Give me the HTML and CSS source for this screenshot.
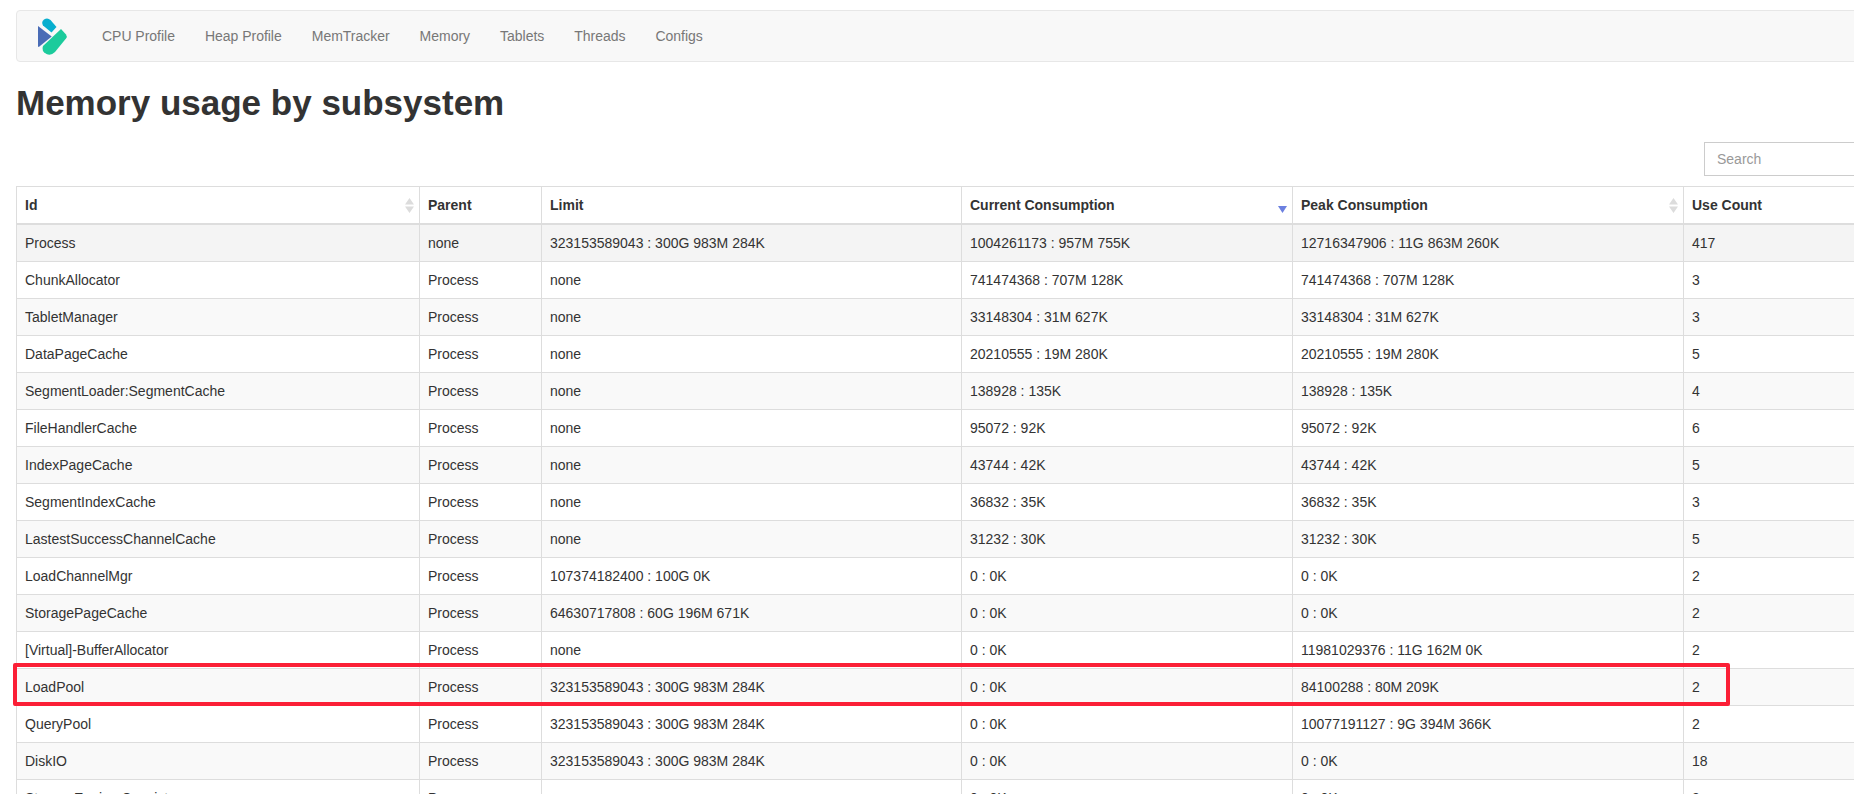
FILE: index.html
```html
<!DOCTYPE html>
<html lang="en">
<head>
<meta charset="utf-8">
<title>Memory usage by subsystem</title>
<link rel="stylesheet" href="styles.css">
</head>
<body>
<div class="page">
  <nav class="navbar">
    <a class="brand" href="#">
      <svg class="logo" viewBox="0 0 30 38" width="30" height="38" aria-hidden="true">
        <path d="M0 8 L13.7 18.5 L0.8 29 Q0 29 0 28 Z" fill="#4a6cb6"/>
        <path d="M5 7.5 Q3 4 6 1.5 Q9.5 -0.8 12.5 2 L18.5 9 L13.5 14.5 Z" fill="#07aecf"/>
        <path d="M23 11 L28 16.5 Q29.5 18.5 28 20.5 L17 34 Q13 38 8.5 36 Q3 33 5 28 Z" fill="#1ccb9c"/>
      </svg>
    </a>
    <ul class="nav">
      <li><a href="#">CPU Profile</a></li>
      <li><a href="#">Heap Profile</a></li>
      <li><a href="#">MemTracker</a></li>
      <li><a href="#">Memory</a></li>
      <li><a href="#">Tablets</a></li>
      <li><a href="#">Threads</a></li>
      <li><a href="#">Configs</a></li>
    </ul>
  </nav>
  <h1 class="title">Memory usage by subsystem</h1>
  <div class="toolbar">
    <input class="search" type="text" placeholder="Search">
  </div>
  <table class="grid">
    <colgroup>
      <col class="c-id"><col class="c-parent"><col class="c-limit"><col class="c-current"><col class="c-peak"><col class="c-count">
    </colgroup>
    <thead>
      <tr>
        <th>Id<svg class="sort" viewBox="0 0 9 15" width="9" height="15" aria-hidden="true"><path d="M4.5 0 L9 6.5 H0 Z M0 8.5 H9 L4.5 15 Z" fill="#dcdcdc"/></svg></th>
        <th>Parent</th>
        <th>Limit</th>
        <th>Current Consumption<svg class="sort-desc" viewBox="0 0 9 7" width="9" height="7" aria-hidden="true"><path d="M0 0 H9 L4.5 7 Z" fill="#6c80e0"/></svg></th>
        <th>Peak Consumption<svg class="sort" viewBox="0 0 9 15" width="9" height="15" aria-hidden="true"><path d="M4.5 0 L9 6.5 H0 Z M0 8.5 H9 L4.5 15 Z" fill="#dcdcdc"/></svg></th>
        <th>Use Count</th>
      </tr>
    </thead>
    <tbody>
      <tr class="hover"><td>Process</td><td>none</td><td>323153589043 : 300G 983M 284K</td><td>1004261173 : 957M 755K</td><td>12716347906 : 11G 863M 260K</td><td>417</td></tr>
      <tr><td>ChunkAllocator</td><td>Process</td><td>none</td><td>741474368 : 707M 128K</td><td>741474368 : 707M 128K</td><td>3</td></tr>
      <tr><td>TabletManager</td><td>Process</td><td>none</td><td>33148304 : 31M 627K</td><td>33148304 : 31M 627K</td><td>3</td></tr>
      <tr><td>DataPageCache</td><td>Process</td><td>none</td><td>20210555 : 19M 280K</td><td>20210555 : 19M 280K</td><td>5</td></tr>
      <tr><td>SegmentLoader:SegmentCache</td><td>Process</td><td>none</td><td>138928 : 135K</td><td>138928 : 135K</td><td>4</td></tr>
      <tr><td>FileHandlerCache</td><td>Process</td><td>none</td><td>95072 : 92K</td><td>95072 : 92K</td><td>6</td></tr>
      <tr><td>IndexPageCache</td><td>Process</td><td>none</td><td>43744 : 42K</td><td>43744 : 42K</td><td>5</td></tr>
      <tr><td>SegmentIndexCache</td><td>Process</td><td>none</td><td>36832 : 35K</td><td>36832 : 35K</td><td>3</td></tr>
      <tr><td>LastestSuccessChannelCache</td><td>Process</td><td>none</td><td>31232 : 30K</td><td>31232 : 30K</td><td>5</td></tr>
      <tr><td>LoadChannelMgr</td><td>Process</td><td>107374182400 : 100G 0K</td><td>0 : 0K</td><td>0 : 0K</td><td>2</td></tr>
      <tr><td>StoragePageCache</td><td>Process</td><td>64630717808 : 60G 196M 671K</td><td>0 : 0K</td><td>0 : 0K</td><td>2</td></tr>
      <tr><td>[Virtual]-BufferAllocator</td><td>Process</td><td>none</td><td>0 : 0K</td><td>11981029376 : 11G 162M 0K</td><td>2</td></tr>
      <tr><td>LoadPool</td><td>Process</td><td>323153589043 : 300G 983M 284K</td><td>0 : 0K</td><td>84100288 : 80M 209K</td><td>2</td></tr>
      <tr><td>QueryPool</td><td>Process</td><td>323153589043 : 300G 983M 284K</td><td>0 : 0K</td><td>10077191127 : 9G 394M 366K</td><td>2</td></tr>
      <tr><td>DiskIO</td><td>Process</td><td>323153589043 : 300G 983M 284K</td><td>0 : 0K</td><td>0 : 0K</td><td>18</td></tr>
      <tr><td>StorageEngine Consistency</td><td>Process</td><td>none</td><td>0 : 0K</td><td>0 : 0K</td><td>3</td></tr>
    </tbody>
  </table>
  <div class="highlight"></div>
</div>
</body>
</html>
```
FILE: styles.css
```css
* { box-sizing: border-box; }
html, body { margin: 0; height: 100%; overflow: hidden; background: #fff; }
body {
  font-family: "Liberation Sans", Arial, sans-serif;
  font-size: 14px;
  line-height: 20px;
  color: #333;
}
a { text-decoration: none; color: inherit; }
.page {
  position: relative;
  width: 1930px;
  padding: 10px 0 0 16px;
}
.navbar {
  display: flex;
  align-items: center;
  height: 52px;
  background: #f8f8f8;
  border: 1px solid #e7e7e7;
  border-radius: 4px;
}
.brand { display: flex; align-items: center; width: 70px; padding-left: 21px; }
.logo { display: block; margin-top: 2px; }
.nav { display: flex; list-style: none; margin: 0; padding: 0; }
.nav a { display: block; padding: 15px; color: #777; letter-spacing: -0.02px; }
.title {
  margin: 21px 0 0;
  font-size: 35px;
  line-height: 40px;
  font-weight: 700;
  color: #333;
}
.toolbar { margin-top: 19px; padding-left: 1688px; height: 44px; }
.search {
  display: block;
  width: 226px;
  height: 34px;
  padding: 6px 12px;
  font: inherit;
  color: #555;
  border: 1px solid #ccc;
  background: #fff;
}
.search::placeholder { color: #999; opacity: 1; }
.grid {
  table-layout: fixed;
  border-collapse: collapse;
  width: 1914px;
}
.c-id { width: 403px; }
.c-parent { width: 122px; }
.c-limit { width: 420px; }
.c-current { width: 331px; }
.c-peak { width: 391px; }
.c-count { width: 247px; }
th, td {
  border: 1px solid #ddd;
  padding: 8px;
  text-align: left;
  vertical-align: top;
  white-space: nowrap;
}
th { position: relative; font-weight: 700; border-bottom-width: 2px; }
tbody tr:nth-child(odd) { background: #f9f9f9; }
tbody tr.hover { background: #f4f4f4; }
.sort { position: absolute; right: 5px; top: 11px; }
.sort-desc { position: absolute; right: 5px; top: 19px; }
.highlight {
  position: absolute;
  left: 13px;
  top: 663px;
  width: 1717px;
  height: 43px;
  border: 4px solid #fb1f36;
  border-radius: 2px;
}
```
